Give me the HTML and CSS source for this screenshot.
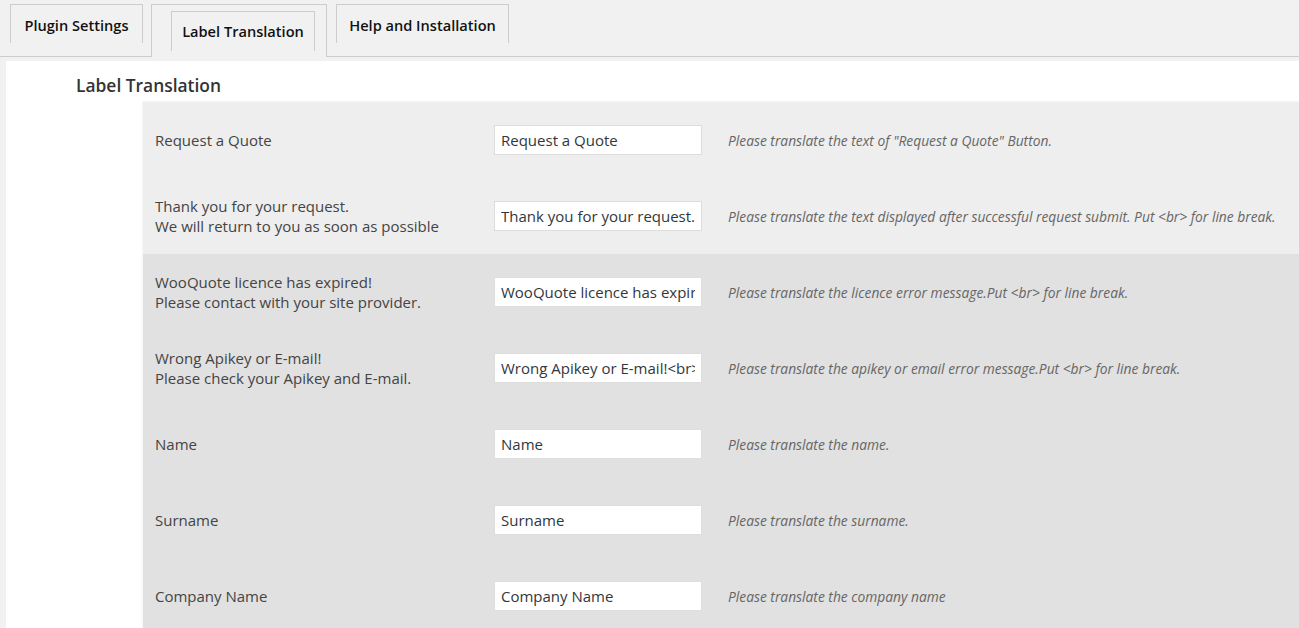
FILE: index.html
```html
<!DOCTYPE html>
<html lang="en">
<head>
<meta charset="utf-8">
<title>Label Translation</title>
<link rel="stylesheet" href="styles.css">
</head>
<body>
<nav class="tabs">
  <a class="tab tab-settings">Plugin Settings</a>
  <div class="tab-active">
    <a class="tab tab-inner">Label Translation</a>
  </div>
  <a class="tab tab-help">Help and Installation</a>
</nav>
<main class="panel">
  <h2 class="title">Label Translation</h2>
  <div class="box">
    <div class="row row-light">
      <div class="label">Request a Quote</div>
      <input class="field" type="text" value="Request a Quote">
      <div class="desc">Please translate the text of "Request a Quote" Button.</div>
    </div>
    <div class="row row-light">
      <div class="label">Thank you for your request.<br>We will return to you as soon as possible</div>
      <input class="field" type="text" value="Thank you for your request.<br>We will return to you as soon as possible">
      <div class="desc">Please translate the text displayed after successful request submit. Put &lt;br&gt; for line break.</div>
    </div>
    <div class="row">
      <div class="label">WooQuote licence has expired!<br>Please contact with your site provider.</div>
      <input class="field" type="text" value="WooQuote licence has expired!<br>Please contact with your site provider.">
      <div class="desc">Please translate the licence error message.Put &lt;br&gt; for line break.</div>
    </div>
    <div class="row">
      <div class="label">Wrong Apikey or E-mail!<br>Please check your Apikey and E-mail.</div>
      <input class="field" type="text" value="Wrong Apikey or E-mail!<br>Please check your Apikey and E-mail.">
      <div class="desc">Please translate the apikey or email error message.Put &lt;br&gt; for line break.</div>
    </div>
    <div class="row">
      <div class="label">Name</div>
      <input class="field" type="text" value="Name">
      <div class="desc">Please translate the name.</div>
    </div>
    <div class="row">
      <div class="label">Surname</div>
      <input class="field" type="text" value="Surname">
      <div class="desc">Please translate the surname.</div>
    </div>
    <div class="row">
      <div class="label">Company Name</div>
      <input class="field" type="text" value="Company Name">
      <div class="desc">Please translate the company name</div>
    </div>
  </div>
</main>
</body>
</html>
```

FILE: styles.css
```css
html, body {
  margin: 0;
  padding: 0;
}
body {
  background: #f1f1f1;
  font-family: "Open Sans", "Noto Sans", "Liberation Sans", sans-serif;
  color: #444;
  overflow: hidden;
}
.tabs {
  display: flex;
  align-items: flex-start;
  padding: 4px 0 0 10px;
  height: 52px;
  border-bottom: 1px solid #ccc;
  box-sizing: content-box;
}
.tab {
  display: block;
  box-sizing: border-box;
  height: 39px;
  padding: 10px 0 0;
  border: 1px solid #ccc;
  border-bottom: none;
  font-size: 14.6px;
  line-height: 21px;
  font-weight: 600;
  color: #111;
  background: #f1f1f1;
  white-space: nowrap;
  text-align: center;
}
.tab-settings {
  width: 133px;
}
.tab-help {
  width: 173px;
}
.tab-active {
  box-sizing: border-box;
  width: 176px;
  height: 53px;
  margin: 0 9px 0 8px;
  padding: 6px 0 0 19px;
  border: 1px solid #ccc;
  border-bottom: none;
  background: #f1f1f1;
  position: relative;
  z-index: 1;
}
.tab-inner {
  width: 144px;
  height: 40px;
  padding-top: 9px;
}
.panel {
  margin: 4px 0 0 6px;
  background: #fff;
  padding: 12px 0 0 0;
  min-height: 600px;
}
.title {
  margin: 0 0 5px 70px;
  font-size: 17.4px;
  line-height: 24px;
  font-weight: 600;
  color: #333;
}
.box {
  margin-left: 137px;
  background: #e1e1e1;
  box-shadow: -1px -1px 2px rgba(0, 0, 0, 0.05);
}
.row {
  display: flex;
  align-items: center;
  height: 76px;
}
.row-light {
  background: #eeeeee;
}
.label {
  box-sizing: border-box;
  width: 351px;
  flex: none;
  padding-left: 12px;
  font-size: 15px;
  line-height: 20px;
  color: #444;
}
.field {
  box-sizing: border-box;
  flex: none;
  width: 208px;
  height: 30px;
  margin: 0;
  padding: 0 6px;
  border: 1px solid #ddd;
  background: #fff;
  font-family: inherit;
  font-size: 15px;
  color: #32373c;
  outline: none;
}
.desc {
  margin-left: 26px;
  font-size: 13.8px;
  font-style: italic;
  color: #666;
  white-space: nowrap;
}
```
